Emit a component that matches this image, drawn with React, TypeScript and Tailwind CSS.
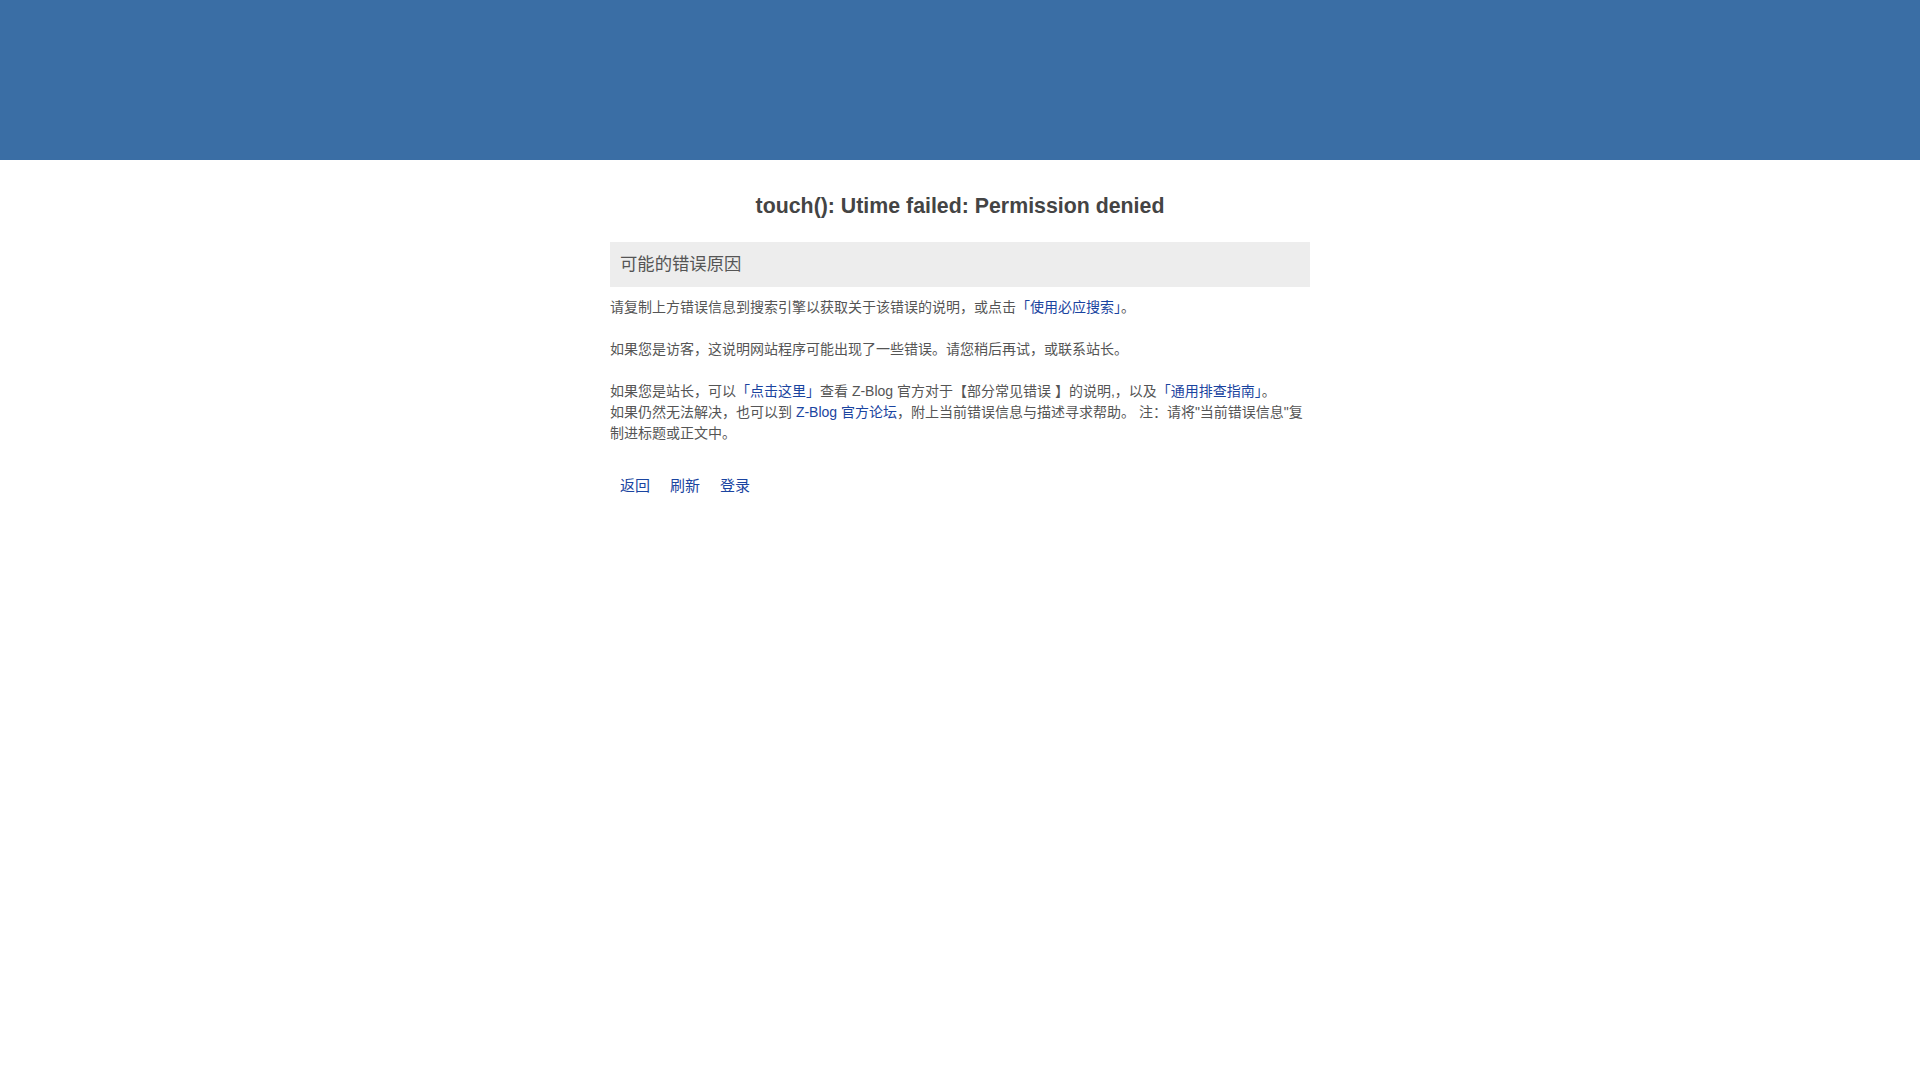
import React from "react";

const font = { fontFamily: '"Liberation Sans", "Noto Sans CJK SC", sans-serif' };

export default function App() {
  return (
    <div className="min-h-screen bg-white" style={font}>
      <div className="h-[160px] bg-[#3a6ea5]" />
      <div className="mx-auto w-[700px]">
        <h1 className="mt-[34px] text-center text-[21.33px] leading-[24px] font-bold text-[#444]">
          touch(): Utime failed: Permission denied
        </h1>
        <div className="mt-[24px] flex h-[45px] items-center bg-[#ededed] px-[10px] text-[17.33px] text-[#555]">
          可能的错误原因
        </div>
        <div className="mt-[10px] text-[14px] leading-[21px] text-[#555]">
          <p>
            请复制上方错误信息到搜索引擎以获取关于该错误的说明，或点击
            <a href="#" className="text-[#1a44a0]">「使用必应搜索」</a>。
          </p>
          <p className="mt-[20.5px]">如果您是访客，这说明网站程序可能出现了一些错误。请您稍后再试，或联系站长。</p>
          <p className="mt-[21.5px]">
            如果您是站长，可以<a href="#" className="text-[#1a44a0]">「点击这里」</a>查看 Z-Blog 官方对于【部分常见错误 】的说明,，以及
            <a href="#" className="text-[#1a44a0]">「通用排查指南」</a>。
            <br />
            如果仍然无法解决，也可以到 <a href="#" className="text-[#1a44a0]">Z-Blog 官方论坛</a>，附上当前错误信息与描述寻求帮助。 注：请将"当前错误信息"复制进标题或正文中。
          </p>
        </div>
        <div className="mt-[31px] flex text-[15px] leading-[22px]">
          <a href="#" className="px-[10px] text-[#1a44a0]">返回</a>
          <a href="#" className="px-[10px] text-[#1a44a0]">刷新</a>
          <a href="#" className="px-[10px] text-[#1a44a0]">登录</a>
        </div>
      </div>
    </div>
  );
}
